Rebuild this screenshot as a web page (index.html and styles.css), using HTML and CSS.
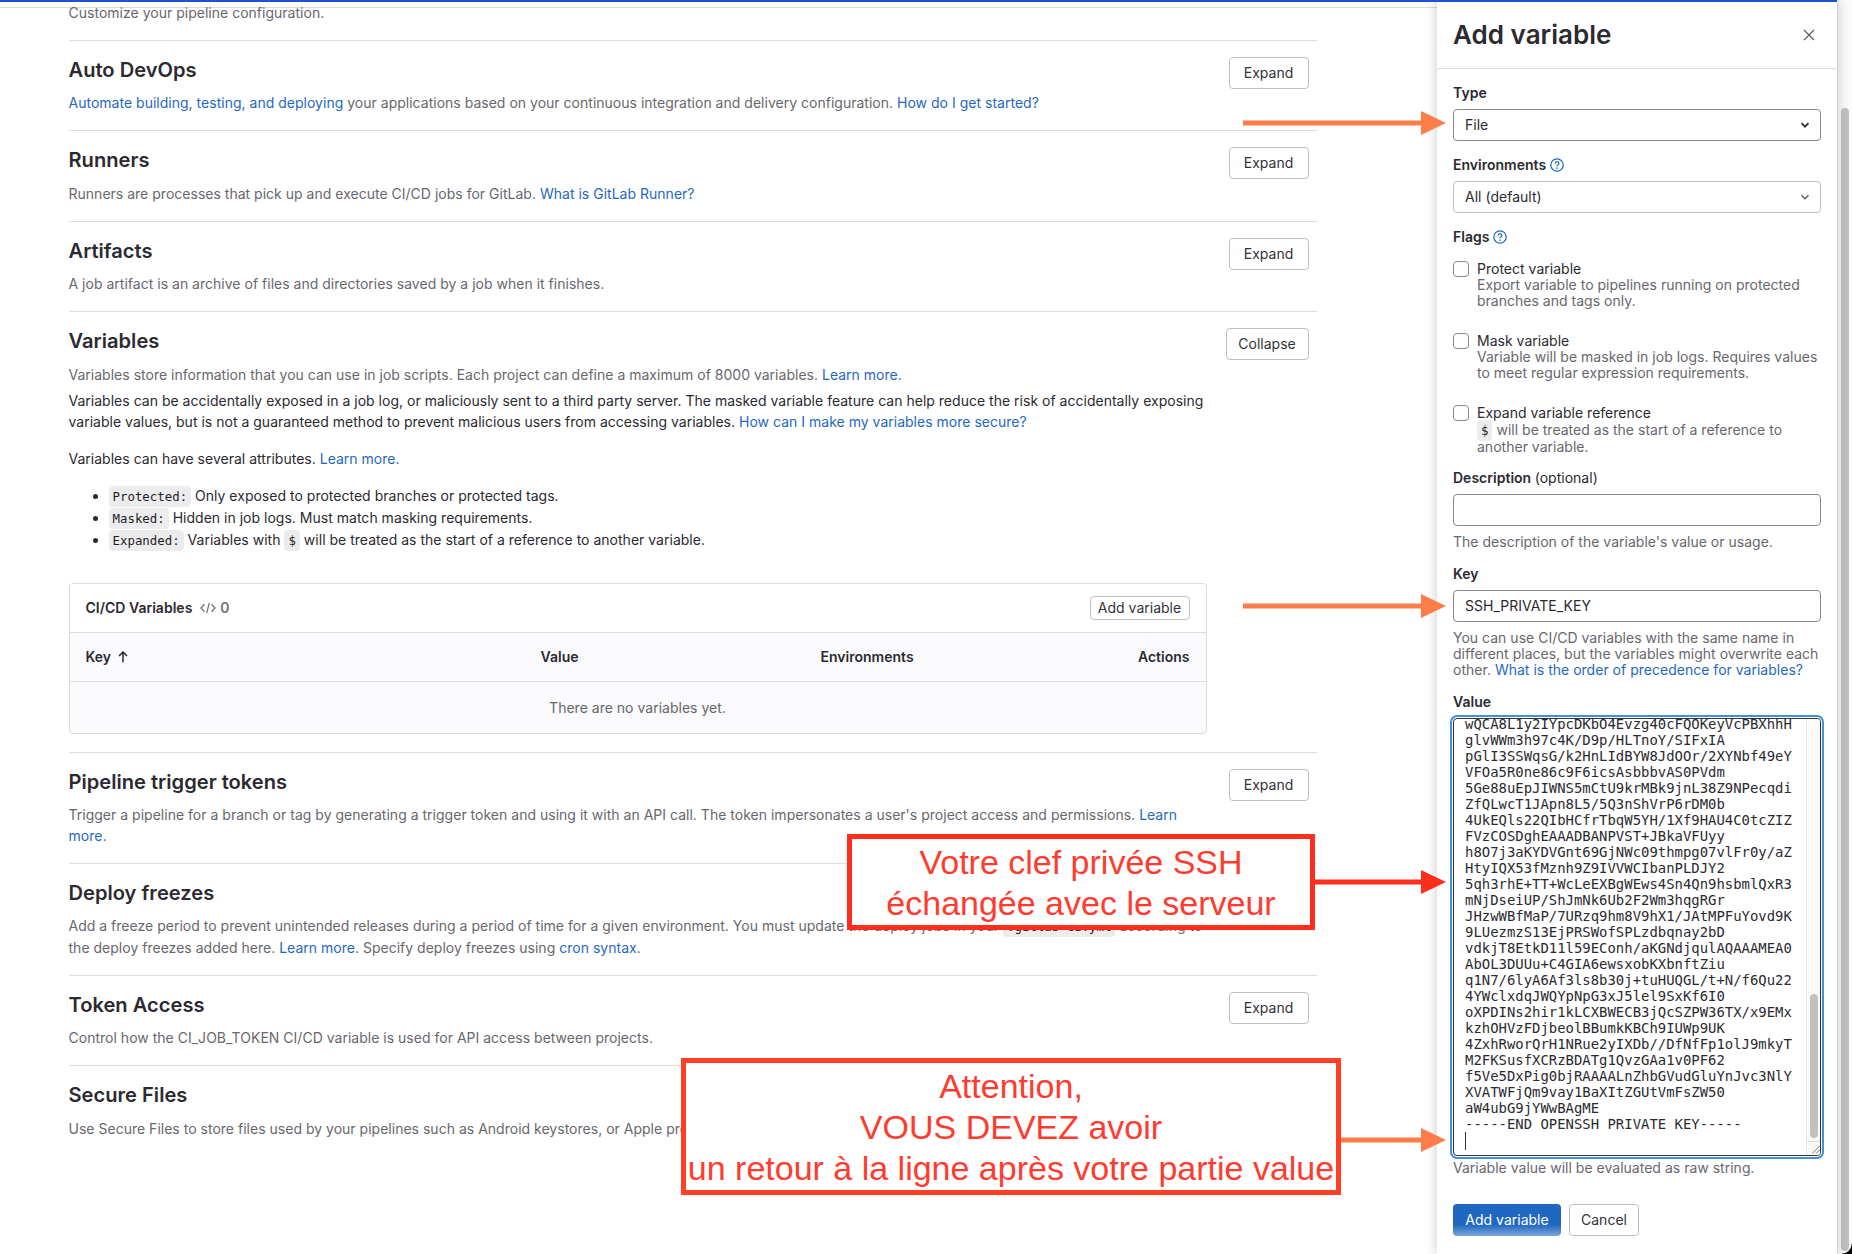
FILE: index.html
```html
<!DOCTYPE html>
<html lang="en">
<head>
<meta charset="utf-8">
<title>CI/CD Settings</title>
<link rel="stylesheet" href="styles.css">
</head>
<body>
<div class="topbar"></div>
<div class="layout">
  <main class="page">
    <div class="content">
      <section class="section first"><p class="desc">Customize your pipeline configuration.</p></section>
      <section class="section">
        <div class="head"><h4>Auto DevOps</h4><button class="btn">Expand</button></div>
        <p class="desc"><a>Automate building, testing, and deploying</a> your applications based on your continuous integration and delivery configuration. <a>How do I get started?</a></p>
      </section>
      <section class="section">
        <div class="head"><h4>Runners</h4><button class="btn">Expand</button></div>
        <p class="desc">Runners are processes that pick up and execute CI/CD jobs for GitLab. <a>What is GitLab Runner?</a></p>
      </section>
      <section class="section">
        <div class="head"><h4>Artifacts</h4><button class="btn">Expand</button></div>
        <p class="desc">A job artifact is an archive of files and directories saved by a job when it finishes.</p>
      </section>
      <section class="section variables">
        <div class="head"><h4>Variables</h4><button class="btn collapse">Collapse</button></div>
        <p class="desc">Variables store information that you can use in job scripts. Each project can define a maximum of 8000 variables. <a>Learn more.</a></p>
        <div class="body">
          <p>Variables can be accidentally exposed in a job log, or maliciously sent to a third party server. The masked variable feature can help reduce the risk of accidentally exposing<br>variable values, but is not a guaranteed method to prevent malicious users from accessing variables. <a>How can I make my variables more secure?</a></p>
          <p>Variables can have several attributes. <a>Learn more.</a></p>
          <ul>
            <li><code>Protected:</code> Only exposed to protected branches or protected tags.</li>
            <li><code>Masked:</code> Hidden in job logs. Must match masking requirements.</li>
            <li><code>Expanded:</code> Variables with <code>$</code> will be treated as the start of a reference to another variable.</li>
          </ul>
          <div class="card">
            <div class="card-head">
              <strong>CI/CD Variables</strong>
              <svg class="code-icon" viewBox="0 0 16 16"><path d="M4.5 4.2 1 8l3.5 3.8M11.5 4.2 15 8l-3.5 3.8M9.3 2.8 6.7 13.2"/></svg>
              <b class="count">0</b>
              <button class="btn small">Add variable</button>
            </div>
            <div class="card-cols">
              <span>Key <svg class="sort" viewBox="0 0 12 12"><path d="M6 11.2V1.2M2 5l4-4 4 4"/></svg></span><span>Value</span><span>Environments</span><span>Actions</span>
            </div>
            <div class="card-empty">There are no variables yet.</div>
          </div>
        </div>
      </section>
      <section class="section">
        <div class="head"><h4>Pipeline trigger tokens</h4><button class="btn">Expand</button></div>
        <p class="desc">Trigger a pipeline for a branch or tag by generating a trigger token and using it with an API call. The token impersonates a user's project access and permissions. <a>Learn<br>more.</a></p>
      </section>
      <section class="section freezes">
        <div class="head"><h4>Deploy freezes</h4></div>
        <p class="desc">Add a freeze period to prevent unintended releases during a period of time for a given environment. You must update the deploy jobs in your <code>.gitlab-ci.yml</code> according to<br>the deploy freezes added here. <a>Learn more.</a> Specify deploy freezes using <a>cron syntax</a>.</p>
      </section>
      <section class="section">
        <div class="head"><h4>Token Access</h4><button class="btn">Expand</button></div>
        <p class="desc">Control how the CI_JOB_TOKEN CI/CD variable is used for API access between projects.</p>
      </section>
      <section class="section">
        <div class="head"><h4>Secure Files</h4></div>
        <p class="desc">Use Secure Files to store files used by your pipelines such as Android keystores, or Apple provisioning profiles.</p>
      </section>
    </div>
  </main>
  <aside class="drawer">
    <header><h2>Add variable</h2><svg class="close" viewBox="0 0 16 16"><path d="M3 3l10 10M13 3 3 13"/></svg></header>
    <div class="form">
      <div class="label">Type</div>
      <div class="input select strong">File<svg viewBox="0 0 16 16"><path d="m4.5 6.2 3.5 3.5 3.5-3.5"/></svg></div>
      <div class="label">Environments <svg class="help" viewBox="0 0 16 16"><circle cx="8" cy="8" r="7.1"/><path d="M5.9 6.3a2.1 2.1 0 1 1 3.2 1.8C8.4 8.5 8 8.8 8 9.5"/><circle class="dot" cx="8" cy="11.6" r=".9"/></svg></div>
      <div class="input select">All (default)<svg viewBox="0 0 16 16"><path d="m4.5 6.2 3.5 3.5 3.5-3.5"/></svg></div>
      <div class="label flags">Flags <svg class="help" viewBox="0 0 16 16"><circle cx="8" cy="8" r="7.1"/><path d="M5.9 6.3a2.1 2.1 0 1 1 3.2 1.8C8.4 8.5 8 8.8 8 9.5"/><circle class="dot" cx="8" cy="11.6" r=".9"/></svg></div>
      <div class="check"><i></i><div>Protect variable<p>Export variable to pipelines running on protected<br>branches and tags only.</p></div></div>
      <div class="check"><i></i><div>Mask variable<p>Variable will be masked in job logs. Requires values<br>to meet regular expression requirements.</p></div></div>
      <div class="check last"><i></i><div>Expand variable reference<p><code>$</code> will be treated as the start of a reference to<br>another variable.</p></div></div>
      <div class="label">Description <span>(optional)</span></div>
      <div class="input strong"></div>
      <p class="hint">The description of the variable's value or usage.</p>
      <div class="label">Key</div>
      <div class="input strong">SSH_PRIVATE_KEY</div>
      <p class="hint three">You can use CI/CD variables with the same name in<br>different places, but the variables might overwrite each<br>other. <a>What is the order of precedence for variables?</a></p>
      <div class="label">Value</div>
      <div class="area">
<pre>wQCA8L1y2IYpcDKbO4Evzg40cFQOKeyVcPBXhhH
glvWWm3h97c4K/D9p/HLTnoY/SIFxIA
pGlI3SSWqsG/k2HnLIdBYW8JdOOr/2XYNbf49eY
VFOa5R0ne86c9F6icsAsbbbvAS0PVdm
5Ge88uEpJIWNS5mCtU9krMBk9jnL38Z9NPecqdi
ZfQLwcT1JApn8L5/5Q3nShVrP6rDM0b
4UkEQls22QIbHCfrTbqW5YH/1Xf9HAU4C0tcZIZ
FVzCOSDghEAAADBANPVST+JBkaVFUyy
h8O7j3aKYDVGnt69GjNWc09thmpg07vlFr0y/aZ
HtyIQX53fMznh9Z9IVVWCIbanPLDJY2
5qh3rhE+TT+WcLeEXBgWEws4Sn4Qn9hsbmlQxR3
mNjDseiUP/ShJmNk6Ub2F2Wm3hqgRGr
JHzwWBfMaP/7URzq9hm8V9hX1/JAtMPFuYovd9K
9LUezmzS13EjPRSWofSPLzdbqnay2bD
vdkjT8EtkD11l59EConh/aKGNdjqulAQAAAMEA0
AbOL3DUUu+C4GIA6ewsxobKXbnftZiu
q1N7/6lyA6Af3ls8b30j+tuHUQGL/t+N/f6Qu22
4YWclxdqJWQYpNpG3xJ5lel9SxKf6I0
oXPDINs2hir1kLCXBWECB3jQcSZPW36TX/x9EMx
kzhOHVzFDjbeolBBumkKBCh9IUWp9UK
4ZxhRworQrH1NRue2yIXDb//DfNfFp1olJ9mkyT
M2FKSusfXCRzBDATg1QvzGAa1v0PF62
f5Ve5DxPig0bjRAAAALnZhbGVudGluYnJvc3NlY
XVATWFjQm9vay1BaXItZGUtVmFsZW50
aW4ubG9jYWwBAgME
-----END OPENSSH PRIVATE KEY-----
<span class="caret"></span></pre>
        <div class="track"><div class="thumb"></div><svg viewBox="0 0 15 14"><path d="M5 12.5 13 4.5M9 12.5l4-4"/></svg></div>
      </div>
      <p class="hint value-hint">Variable value will be evaluated as raw string.</p>
      <div class="actions"><button class="btn primary">Add variable</button><button class="btn">Cancel</button></div>
    </div>
  </aside>
  <div class="scrollbar"><div class="thumb"></div></div>
</div>
<div class="corner"></div>

<svg class="arrow orange a1" viewBox="0 0 203 24"><path d="M0 9.5h178V0l25 12-25 12v-9.500H0z"/></svg>
<svg class="arrow orange a2" viewBox="0 0 203 24"><path d="M0 9.5h178V0l25 12-25 12v-9.500H0z"/></svg>
<svg class="arrow red a3" viewBox="0 0 131 24"><path d="M0 9.5h106V0l25 12-25 12v-9.500H0z"/></svg>
<svg class="arrow orange a4" viewBox="0 0 105 24"><path d="M0 9.5h80V0l25 12-25 12v-9.500H0z"/></svg>
<div class="note n1">Votre clef privée SSH<br>échangée avec le serveur</div>
<div class="note n2">Attention,<br>VOUS DEVEZ avoir<br>un retour à la ligne après votre partie value</div>
</body>
</html>
```
FILE: styles.css
```css
* { box-sizing: border-box; }
body { margin: 0; width: 1852px; height: 1254px; overflow: hidden; position: relative; background: #fff; color: #2b2a30; font: 14px/21px Inter, "Noto Sans", sans-serif; letter-spacing: .013px; }
p, h2, h4, ul { margin: 0; }
a { color: #1f68c1; }
code { font: 12.4px/14px "DejaVu Sans Mono", monospace; letter-spacing: 0; background: #ececef; border-radius: 4px; padding: 3px 4px; color: #1f1e24; }
svg { fill: none; stroke: currentColor; }

.topbar { position: absolute; z-index: 3; top: 0; left: 0; width: 1837px; height: 2px; background: #1f52d0; }
.layout { display: flex; height: 1254px; }
.page { width: 1437px; border-top: 1px solid #dcdcde; margin-top: 7px; }
.content { width: 1248px; margin-left: 68.5px; }

.section { border-top: 1px solid #dcdcde; padding: 16px 0 17px; }
.section.first { border: 0; padding: 0; margin-top: -6px; height: 38px; }
.head { display: flex; justify-content: space-between; height: 35.4px; }
.head h4 { font-size: 20.1px; font-weight: 600; line-height: 26px; }
.head .btn { margin-right: 8px; }
.desc { color: #68676d; white-space: nowrap; }
.btn { font: 14px/16px Inter, sans-serif; color: #333238; background: #fff; border: 1px solid #bfbfc3; border-radius: 4px; height: 32px; width: 80px; padding: 0; flex: none; }
.btn.collapse { width: 83px; }
.section.variables { height: 440.4px; }
.section.freezes { height: 112px; }
.freezes .desc { line-height: 22px; }

.body { width: 1138px; padding-top: 5px; }
.body p { white-space: nowrap; margin-bottom: 16px; }
.body ul { padding-left: 40px; line-height: 22px; margin: 0 0 32px; }
.card { border: 1px solid #dcdcde; border-radius: 4px; height: 151px; background: #fbfafd; }
.card-head { display: flex; align-items: center; height: 48px; padding: 0 16px; background: #fff; border-radius: 4px 4px 0 0; }
.card-head strong { font-weight: 600; }
.code-icon { width: 16px; height: 16px; margin: 0 4px 0 8px; color: #737278; stroke-width: 1.3; }
.count { color: #737278; font-weight: 600; }
.btn.small { width: 100px; height: 24px; margin-left: auto; }
.card-cols { display: grid; grid-template-columns: 455px 280px 1fr auto; align-items: center; height: 50px; padding: 0 16px; border: solid #dcdcde; border-width: 1px 0; font-weight: 600; }
.sort { width: 12px; height: 12px; stroke-width: 1.5; margin-left: 2px; vertical-align: -1px; }
.card-empty { height: 52px; line-height: 52px; text-align: center; color: #68676d; }

.drawer { width: 400px; height: 1254px; background: #fff; box-shadow: 0 0 12px rgba(0,0,0,.22); z-index: 1; }
.drawer header { display: flex; justify-content: space-between; align-items: center; height: 69px; border-bottom: 1px solid #dcdcde; padding: 1px 20px 0 16px; }
.drawer h2 { font-size: 26px; line-height: 32px; font-weight: 600; }
.close { width: 16px; height: 16px; color: #626168; stroke-width: 1.3; }
.form { padding: 16px 16px 0; line-height: 16px; }
.label { font-weight: 600; height: 24px; line-height: 16px; }
.label.flags { height: 32px; }
.label span { font-weight: 400; }
.help { width: 14px; height: 14px; color: #1f68c1; vertical-align: -2px; stroke-width: 1.4; }
.help .dot { fill: currentColor; stroke: none; }
.input { display: flex; justify-content: space-between; align-items: center; border: 1px solid #bfbfc3; border-radius: 4px; width: 368px; height: 32px; padding: 0 7px 0 11px; margin-bottom: 16px; }
.input.strong { border-color: #89888d; }
.input svg { width: 16px; height: 16px; stroke-width: 1.4; color: #626168; }
.input.strong svg { stroke-width: 1.8; color: #333238; }
.check { display: flex; gap: 8px; height: 72px; white-space: nowrap; }
.check i { width: 16px; height: 16px; border: 1px solid #89888d; border-radius: 4px; flex: none; }
.check p, .hint { color: #68676d; }
.check.last { height: 65px; }
.check.last p { line-height: 17px; }
.hint { margin-top: -8px; height: 32px; white-space: nowrap; }
.hint.three { height: 64px; }
.area { width: 368px; height: 438px; border: 1px solid #333238; border-radius: 4px; box-shadow: 0 0 0 1px #fff, 0 0 0 3px #428fdc; display: flex; overflow: hidden; }
.area pre { margin: -3px 0 0; width: 352px; padding-left: 11px; font: 13.93px/16px "DejaVu Sans Mono", monospace; letter-spacing: 0; flex: none; }
.caret { display: block; width: 1px; height: 18px; background: #333238; }
.track { width: 15px; background: #fafafa; border-left: 1px solid #e8e8e8; padding-left: 3px; flex: none; }
.track .thumb { width: 8px; height: 144px; border-radius: 4px; background: #c1c1c1; margin-top: 275px; }
.track svg { width: 15px; height: 14px; margin: 3px 0 0 -3px; border-top: 1px solid #ddd; stroke: #666; }
.value-hint { margin-top: 4px; height: 44px; }
.actions { display: flex; gap: 8px; }
.actions .btn { width: 70px; }
.actions .btn.primary { width: 108px; color: #fff; border-color: transparent; background: linear-gradient(#1f68c1 65%, #80a5da) border-box; }

.scrollbar { width: 15px; background: #fafafa; border-left: 1px solid #e8e8e8; padding: 108px 0 0 3px; }
.scrollbar .thumb { width: 8px; height: 1143px; border-radius: 4px; background: #c1c1c1; }
.corner { position: absolute; right: 0; bottom: 0; width: 10px; height: 10px; background: radial-gradient(circle at 0 0, transparent 9px, #000 10px); }

.arrow { position: absolute; z-index: 4; height: 24px; fill: #fc7d47; stroke: none; }
.a1, .a2 { left: 1243px; width: 203px; }
.a1 { top: 111px; }
.a2 { top: 594px; }
.a3 { left: 1315px; top: 870px; width: 131px; fill: #ff2d1c; }
.a4 { left: 1341px; top: 1128px; width: 105px; }
.note { position: absolute; z-index: 3; background: #fff; border: 5px solid #ff2d1c; color: #ff3b30; text-align: center; white-space: nowrap; letter-spacing: 0; font: 34px/41px "Liberation Sans", Arial, sans-serif; }
.n1 { left: 847px; top: 834px; width: 468px; height: 96px; padding-top: 3px; }
.n2 { left: 681px; top: 1058px; width: 660px; height: 137px; padding-top: 3px; border-color: #ff4024; }
```
